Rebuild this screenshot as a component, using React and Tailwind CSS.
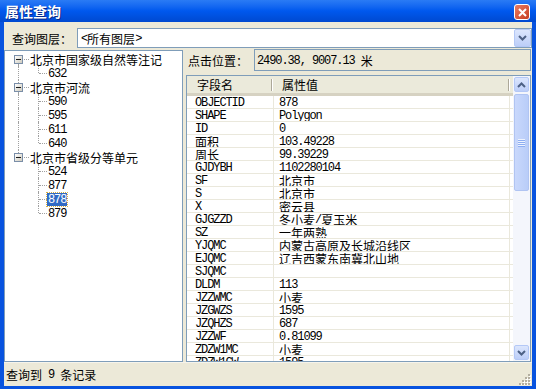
import React from 'react';

const CJK = /([\u3000-\u303f\u4e00-\u9fff\uff00-\uffef]+)/;

// SimSun-like look: CJK in Noto, latin in a narrow mono
function T({ children }) {
  const parts = String(children).split(CJK);
  return parts.map((p, i) => {
    if (!p) return null;
    if (CJK.test(p)) return <span key={i} className="font-['Noto_Sans_CJK_SC',sans-serif] text-[12px] leading-[13px]">{p}</span>;
    return <span key={i} className="relative top-[1px] font-['Liberation_Mono',monospace] text-[12px] leading-[13px] tracking-[-1.1px] whitespace-pre">{p}</span>;
  });
}

const TREE = [
  { name: '北京市国家级自然等注记', items: ['632'] },
  { name: '北京市河流', items: ['590', '595', '611', '640'] },
  { name: '北京市省级分等单元', items: ['524', '877', '878', '879'] },
];

const ROWS = [
  ['OBJECTID', '878'], ['SHAPE', 'Polygon'], ['ID', '0'], ['面积', '103.49228'], ['周长', '99.39229'],
  ['GJDYBH', '1102280104'], ['SF', '北京市'], ['S', '北京市'], ['X', '密云县'], ['GJGZZD', '冬小麦/夏玉米'],
  ['SZ', '一年两熟'], ['YJQMC', '内蒙古高原及长城沿线区'], ['EJQMC', '辽吉西蒙东南冀北山地'], ['SJQMC', ''],
  ['DLDM', '113'], ['JZZWMC', '小麦'], ['JZGWZS', '1595'], ['JZQHZS', '687'], ['JZZWF', '0.81099'],
  ['ZDZW1MC', '小麦'], ['ZDZW1GW', '1595'],
];

function Chevron({ up }) {
  return (
    <svg width="9" height="6" viewBox="0 0 9 6">
      <polyline points={up ? '1,5 4.5,1.5 8,5' : '1,1 4.5,4.5 8,1'} fill="none" stroke="#4D6185" strokeWidth="2" />
    </svg>
  );
}

function ScrollBtn({ up }) {
  return (
    <div className="w-[15px] h-[15px] mx-[1px] shrink-0 rounded-[2px] border border-[#B4C8F6] bg-gradient-to-b from-[#DCE6FD] to-[#BCCEF8] flex items-center justify-center">
      <Chevron up={up} />
    </div>
  );
}

function Dotted({ className }) {
  return <div className={`absolute border-[#A0A0A0] border-dotted ${className}`} />;
}

function TreePanel() {
  return (
    <div className="w-[179px] h-[312px] mt-[1px] bg-white border border-[#7F9DB9] pt-[1px] overflow-hidden">
      {TREE.map((node, ni) => {
        const lastRoot = ni === TREE.length - 1;
        return (
          <div key={node.name}>
            <div className="relative h-[14px] flex items-center">
              {ni > 0 && <Dotted className="left-[13px] top-0 h-[3px] border-l" />}
              {!lastRoot && <Dotted className="left-[13px] top-[12px] h-[2px] border-l" />}
              <div className="absolute left-[9px] top-[3px] w-[9px] h-[9px] border border-[#7A8EA8] bg-gradient-to-br from-white to-[#CFCBBE] flex items-center justify-center">
                <div className="w-[5px] h-[1px] bg-[#1A1A1A]" />
              </div>
              <Dotted className="left-[19px] top-[7px] w-[5px] border-t" />
              <div className="ml-[25px] flex items-center text-black"><T>{node.name}</T></div>
            </div>
            {node.items.map((it, ii) => {
              const lastChild = ii === node.items.length - 1;
              const sel = it === '878';
              return (
                <div key={it} className="relative h-[14px] flex items-center">
                  {!lastRoot && <Dotted className="left-[13px] top-0 h-[14px] border-l" />}
                  <Dotted className={`left-[33px] top-0 border-l ${lastChild ? 'h-[7px]' : 'h-[14px]'}`} />
                  <Dotted className="left-[34px] top-[7px] w-[8px] border-t" />
                  <div className={`ml-[42px] px-[1px] h-[13px] flex items-center ${sel ? 'bg-[#316AC5] text-white outline outline-1 outline-dotted outline-[#D8B040]' : 'text-black'}`}>
                    <T>{it}</T>
                  </div>
                </div>
              );
            })}
          </div>
        );
      })}
    </div>
  );
}

function Grid() {
  return (
    <div className="h-[287px] mr-[1px] border border-[#7F9DB9] bg-white flex overflow-hidden">
      <div className="flex-1 flex flex-col overflow-hidden">
        <div className="h-[20px] flex items-center bg-[#EBEADB] border-b-[3px] border-[#D6D2C2] shrink-0">
          <div className="w-[86px] h-full flex items-center pl-[10px] relative">
            <T>字段名</T>
            <div className="absolute right-0 top-[3px] h-[12px] w-[2px] border-l border-[#ACA899] bg-white" />
          </div>
          <div className="flex-1 h-full flex items-center pl-[9px] relative">
            <T>属性值</T>
            <div className="absolute right-[3px] top-[3px] h-[12px] w-[2px] border-l border-[#ACA899] bg-white" />
          </div>
        </div>
        {ROWS.map(([k, v]) => (
          <div key={k} className="h-[13px] shrink-0 flex border-b border-[#EAE8DC] text-black">
            <div className="w-[87px] pl-[8px] border-r border-[#EAE8DC] flex items-center overflow-hidden whitespace-nowrap"><T>{k}</T></div>
            <div className="w-[236px] pl-[5px] border-r border-[#EAE8DC] flex items-center overflow-hidden whitespace-nowrap"><T>{v}</T></div>
          </div>
        ))}
      </div>
      <div className="w-[17px] shrink-0 bg-[#F4F6FC] flex flex-col pt-[1px] pb-[1px]">
        <ScrollBtn up />
        <div className="mx-[1px] mt-[2px] h-[97px] shrink-0 rounded-[2px] border border-[#B0C4F2] bg-gradient-to-r from-[#C9D8FC] to-[#B9CDF8] flex flex-col items-center justify-center gap-[1px]">
          {[0, 1, 2, 3].map(i => <div key={i} className="w-[7px] h-[1px] bg-[#EEF3FE] shadow-[0_1px_0_#8EAEF2]" />)}
        </div>
        <div className="flex-1" />
        <ScrollBtn />
      </div>
    </div>
  );
}

export default function App() {
  return (
    <div className="w-[536px] h-[389px] bg-[#0853DF] flex flex-col overflow-hidden select-none">
      <div className="h-[22px] shrink-0 flex items-center justify-between pl-[5px] pr-[6px] bg-gradient-to-b from-[#2A7BF5] via-[#0058EE] to-[#0049D0]">
        <span className="font-['Noto_Sans_CJK_SC',sans-serif] font-bold text-[14px] leading-none text-white [text-shadow:1px_1px_0_#0A2A8A]">属性查询</span>
        <div className="w-[16px] h-[16px] mt-[2px] rounded-[3px] border border-white bg-gradient-to-br from-[#E97C62] to-[#C63A1C] flex items-center justify-center">
          <svg width="9" height="9" viewBox="0 0 9 9">
            <path d="M1 1 L8 8 M8 1 L1 8" stroke="white" strokeWidth="2" />
          </svg>
        </div>
      </div>

      <div className="flex-1 mx-[4px] mb-[3px] bg-[#ECE9D8] flex flex-col">
        <div className="h-[27px] shrink-0 flex items-end">
          <div className="h-[22px] flex items-center pl-[8px] w-[73px] text-black"><T>查询图层：</T></div>
          <div className="h-[20px] flex-1 mb-[1px] bg-white border border-[#7F9DB9] flex items-center">
            <div className="flex-1 pl-[3px] flex items-center text-black"><T>&lt;所有图层&gt;</T></div>
            <div className="w-[17px] h-[18px] rounded-[2px] border border-[#B4C8F6] bg-gradient-to-b from-[#DCE6FD] to-[#BCCEF8] flex items-center justify-center">
              <Chevron />
            </div>
          </div>
        </div>

        <div className="flex">
          <TreePanel />
          <div className="flex-1 pl-[3px] flex flex-col">
            <div className="h-[22px] flex items-center">
              <div className="w-[68px] pl-[2px] flex items-center text-black"><T>点击位置：</T></div>
              <div className="flex-1 h-[22px] mr-[1px] border border-[#7F9DB9] flex items-center pl-[2px] text-black">
                <T>2490.38, 9007.13 米</T>
              </div>
            </div>
            <div className="mt-[4px]">
              <Grid />
            </div>
          </div>
        </div>

        <div className="flex-1 flex items-center justify-between pl-[2px] pr-[1px] border-t border-[#F6F4EC]">
          <div className="flex items-center text-black"><T>查询到 9 条记录</T></div>
          <svg width="12" height="12" viewBox="0 0 12 12" className="self-end mb-[1px]">
            {[[9, 1], [6, 4], [9, 4], [3, 7], [6, 7], [9, 7], [0, 10], [3, 10], [6, 10], [9, 10]].map(([x, y], i) => (
              <g key={i}>
                <rect x={x + 1} y={y + 1} width="2" height="2" fill="#FFFFFF" />
                <rect x={x} y={y} width="2" height="2" fill="#B3AE9F" />
              </g>
            ))}
          </svg>
        </div>
      </div>
    </div>
  );
}
